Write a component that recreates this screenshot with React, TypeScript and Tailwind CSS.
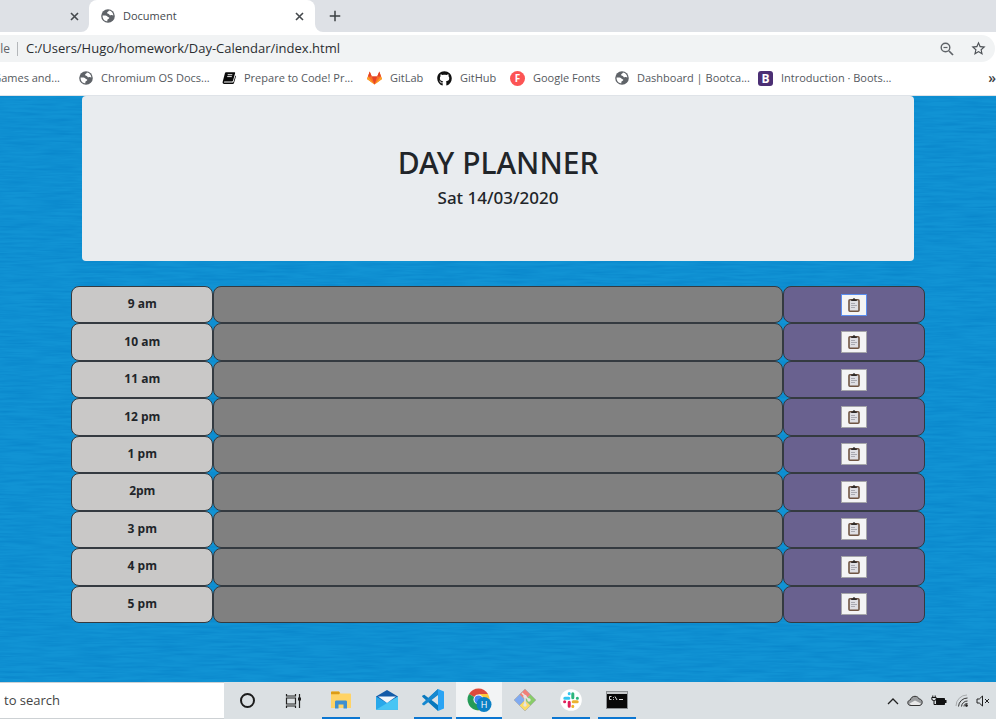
import React from "react";
import { FaGithub } from "react-icons/fa";
import { MdStarBorder, MdAdd } from "react-icons/md";

function Globe() {
  return (
    <svg width="14" height="14" viewBox="0 0 14 14" aria-hidden="true" className="shrink-0">
      <circle cx="7" cy="7" r="6.8" fill="#5f6368" />
      <path d="M1.6 6.6C4 6.2 5.6 6.4 6.400 7.400c.6.8 2 .6 1.900 1.700-.1 1-1.700.8-1.900 1.800l-.2 1.500C3.200 12.200 1.300 9.500 1.600 6.600Z" fill="#fff" />
      <path d="M8 1.600c-.2 1.200-2.100 1.200-1.900 2.400.2 1 1.900.4 2.200 1.400.3.900 1.300 1.100 2 .7.700-.3 1.300.2 2.100.5C12.300 4 10.500 1.900 8 1.600Z" fill="#fff" />
    </svg>
  );
}

function Close() {
  return (
    <svg width="13" height="13" viewBox="0 0 13 13" aria-hidden="true">
      <path d="m3 3 7 7m0-7-7 7" stroke="currentColor" strokeWidth="1.600" />
    </svg>
  );
}

function Book() {
  return (
    <svg width="14" height="14" viewBox="0 0 14 14" aria-hidden="true" className="shrink-0">
      <path d="M4 1.200h8.300c.7 0 1 .5.800 1.100l-2.100 7.400c-.1.500-.5.800-1 .8H2.600c-1 0-1 1.100 0 1.100h8.200c.4 0 .6-.2.700-.500l1.900-6.700c.5.200.6.600.5 1l-1.900 6.600c-.2.600-.6.900-1.200.9H2.300C.9 12.900.3 11.900.7 10.700L3 2c.1-.5.500-.8 1-.8Z" fill="#0a0a0a" />
      <path d="M5.700 3.700h4.600M5.200 5.600h4.600" stroke="#fff" strokeWidth=".9" />
    </svg>
  );
}

function Gitlab() {
  return (
    <svg width="15" height="14" viewBox="0 0 15 14" aria-hidden="true" className="shrink-0">
      <path d="M7.500 13.500 0 8 2.700.5 4.800 5.500h5.400L12.300.5 15 8Z" fill="#fc6d26" />
      <path d="M7.500 13.500 4.800 5.500h5.400Z" fill="#e24329" />
      <path d="M7.500 13.500 0 8l1-2.500Zm0 0L15 8l-1-2.500Z" fill="#fca326" />
      <path d="M1 5.500 2.700.5l2.100 5Zm13 0L12.300.5l-2.100 5Z" fill="#e24329" />
    </svg>
  );
}

const bookmarks = [
  { label: "Chromium OS Docs...", width: "w-[143px]", icon: <Globe /> },
  { label: "Prepare to Code! Pr...", width: "w-[145px]", icon: <Book /> },
  { label: "GitLab", width: "w-[70px]", icon: <Gitlab /> },
  { label: "GitHub", width: "w-[73px]", icon: <FaGithub size={15} color="#111" className="shrink-0" /> },
  {
    label: "Google Fonts",
    width: "w-[105px]",
    icon: <span className="size-[15px] shrink-0 rounded-full bg-[#fc5454] text-center text-[10px] leading-[15px] font-bold text-white">F</span>,
  },
  { label: "Dashboard | Bootca...", width: "w-[143px]", icon: <Globe /> },
  {
    label: "Introduction · Boots...",
    width: "w-[145px]",
    icon: <span className="size-[15px] shrink-0 rounded-[3px] bg-[#4b2f74] text-center text-[12px] leading-[15px] font-bold text-white">B</span>,
  },
];

function TabStrip() {
  return (
    <div className="flex h-8 shrink-0 bg-[#dee1e6]">
      <div className="flex w-[89px] items-center justify-end pr-2">
        <button aria-label="Close previous tab" className="text-[#45494d]"><Close /></button>
      </div>
      <div className="relative flex w-[226px] items-center rounded-t-lg bg-white pl-3">
        <svg className="absolute bottom-0 -left-2" width="8" height="8" aria-hidden="true"><path d="M8 0v8H0a8 8 0 0 0 8-8Z" fill="#fff" /></svg>
        <svg className="absolute -right-2 bottom-0" width="8" height="8" aria-hidden="true"><path d="M0 0v8h8A8 8 0 0 1 0 0Z" fill="#fff" /></svg>
        <Globe />
        <span className="ml-2 flex-1 text-[11px] text-[#45494d]">Document</span>
        <button aria-label="Close tab" className="mr-[9px] text-[#45494d]"><Close /></button>
      </div>
      <button aria-label="New tab" className="ml-[11px] text-[#3c4043]"><MdAdd size={18} /></button>
    </div>
  );
}

function AddressBar() {
  return (
    <div className="h-[33px] shrink-0 bg-white pt-[3px] pr-px">
      <div className="flex h-[27px] items-center rounded-r-full bg-[#f1f3f4] pr-2 text-[13px]">
        <span className="flex w-[10px] justify-end text-[12px] text-[#5f6368]">le</span>
        <span className="ml-[7px] h-[14px] w-px bg-[#b4b7ba]" />
        <input
          aria-label="Address"
          defaultValue="C:/Users/Hugo/homework/Day-Calendar/index.html"
          className="ml-2 min-w-0 flex-1 bg-transparent text-[#2b2e31] outline-none"
        />
        <button aria-label="Zoom out" className="mr-4">
          <svg width="14" height="14" viewBox="0 0 14 14" fill="none" stroke="#5f6368" aria-hidden="true">
            <circle cx="5.500" cy="5.500" r="4.300" strokeWidth="1.400" />
            <path d="M3.500 5.500h4" strokeWidth="1.200" />
            <path d="m9 9 4 4" strokeWidth="1.700" />
          </svg>
        </button>
        <button aria-label="Bookmark this page" className="text-[#4d5156]"><MdStarBorder size={17} /></button>
      </div>
    </div>
  );
}

function Bookmarks() {
  return (
    <nav className="flex h-[31px] shrink-0 items-center overflow-hidden border-b border-[#dfe3e8] bg-white pb-1 text-[11px] text-[#55595e]">
      <a href="#games" className="flex w-[79px] shrink-0">
        <span className="flex w-[60px] justify-end whitespace-nowrap">Games and...</span>
      </a>
      {bookmarks.map((b) => (
        <a key={b.label} href="#bookmark" className={`flex shrink-0 items-center gap-2 whitespace-nowrap ${b.width}`}>
          {b.icon}
          {b.label}
        </a>
      ))}
      <button aria-label="More bookmarks" className="ml-auto text-[14px] leading-4 font-semibold text-[#3c4043]">»</button>
    </nav>
  );
}

function Clipboard() {
  return (
    <svg width="12" height="14" viewBox="0 0 12 14" aria-hidden="true">
      <rect x="1" y="1.800" width="10" height="11.400" rx="1" fill="#dfdfe4" stroke="#705543" strokeWidth="1.600" />
      <path d="M3.200 1.500h1.500a1.300 1.300 0 0 1 2.600 0h1.500v1.600H3.200Z" fill="#2e2a28" />
      <path d="M3 5.500h4M3 7.500h6M3 9.500h4" stroke="#a9a9b1" />
    </svg>
  );
}

const hours = ["9 am", "10 am", "11 am", "12 pm", "1 pm", "2pm", "3 pm", "4 pm", "5 pm"];

function Planner() {
  return (
    <main className="relative flex-1 overflow-hidden bg-[#1193d4]">
      <svg className="absolute inset-0 size-full" aria-hidden="true">
        <filter id="grain" x="0" y="0" width="100%" height="100%" colorInterpolationFilters="sRGB">
          <feTurbulence type="fractalNoise" baseFrequency="0.026 0.4" numOctaves="3" seed="4" />
          <feColorMatrix values="0 0 0 0 0.02  0 0 0 0 0.5  0 0 0 0 0.78  1.100 0 0 0 -0.350" />
        </filter>
        <rect width="100%" height="100%" filter="url(#grain)" />
      </svg>
      <div className="relative mx-auto w-6/7 max-w-[854px]">
        <header className="mx-[11px] rounded-[4px] bg-[#e9ecef] pt-12 pb-[51px] text-center font-['Noto_Sans','Open_Sans',sans-serif] text-[#212529]">
          <h1 className="text-[30px] leading-[38px] font-medium">DAY PLANNER</h1>
          <p className="mt-1 text-[17px] leading-6 font-medium">Sat 14/03/2020</p>
        </header>
        <div className="mt-[25px] grid h-[337px] auto-rows-fr">
          {hours.map((h, i) => (
            <div key={h} className="grid grid-cols-[1fr_4fr_1fr]">
              <label htmlFor={`slot-${i}`} className="flex items-center justify-center rounded-lg border border-[#343a40] bg-[#c9c8c7] pb-px text-[12px] font-bold text-[#212529]">
                {h}
              </label>
              <input id={`slot-${i}`} className="min-w-0 rounded-lg border border-[#343a40] bg-[#808080] px-3 text-[12px] outline-none" />
              <div className="flex items-center justify-center rounded-lg border border-[#343a40] bg-[#69618f]">
                <button
                  aria-label={`Save ${h}`}
                  className={`flex h-[22px] w-[26px] items-center justify-center border bg-[#f4f4f5] ${i === 0 ? "border-[#5b8def]" : "border-[#a5a5aa]"}`}
                >
                  <Clipboard />
                </button>
              </div>
            </div>
          ))}
        </div>
      </div>
    </main>
  );
}

function TaskView() {
  return (
    <svg width="17" height="16" viewBox="0 0 17 16" fill="none" stroke="#222" strokeWidth="1.200" aria-hidden="true">
      <path d="M1.500 1v2h9V1M1.500 15v-2h9v2M1.500 5h9v6h-9ZM14.500 1v14" />
      <path d="M13 4.500h3v3h-3Z" fill="#222" stroke="none" />
    </svg>
  );
}

function Folder() {
  return (
    <svg width="20" height="18" viewBox="0 0 20 18" aria-hidden="true">
      <path d="M0 1.500C0 .7.500.5 1 .5h7l1.500 2H19c.6 0 1 .4 1 1V17H0Z" fill="#ffd366" />
      <path d="M0 1.500C0 .7.500.5 1 .5h7l1 1.500-1 1.300H0Z" fill="#dc9c16" />
      <path d="M4 17.500V11c0-1 .5-1.500 1.500-1.500h9c1 0 1.500.5 1.500 1.500v6.500h-3.500v-4h-5v4Z" fill="#3f8fd0" />
    </svg>
  );
}

function Mail() {
  return (
    <svg width="24" height="22" viewBox="0 0 24 22" aria-hidden="true">
      <path d="M1 7.500 12 1l11 6.500V14H1Z" fill="#135ba8" />
      <path d="M1 7.500 12 14l11-6.500v13.200H1Z" fill="#28a8ea" />
      <path d="m1 20.700 22-13.200v13.200Z" fill="#48c5f4" />
      <path d="M3 7.500h18L12 14Z" fill="#f3f8fc" />
    </svg>
  );
}

function Code() {
  return (
    <svg width="24" height="24" viewBox="0 0 24 24" aria-hidden="true">
      <path d="M17 1 7.500 10 3.300 6.700 1.200 7.800v1L17 23Z" fill="#0878bd" />
      <path d="m17 6.500-14 11-1.800-1v-1L17 1Z" fill="#1688d0" />
      <path d="m17 1 6 2.500v17L17 23Z" fill="#2aa4f4" />
      <path d="M17 7v10l-6.500-5Z" fill="#dde2e6" />
    </svg>
  );
}

function Chrome() {
  return (
    <svg width="26" height="25" viewBox="0 0 26 25" aria-hidden="true">
      <path d="M12.500 12.500 3 7a11 11 0 0 1 19 0Z" fill="#dc4a3d" />
      <path d="M12.500 12.500 3 7a11 11 0 0 0 9.500 16.500l4.500-8Z" fill="#259b57" />
      <path d="M12.500 7H22a11 11 0 0 1-9.500 16.500l5-8Z" fill="#fbc93d" />
      <circle cx="12.500" cy="12.500" r="5" fill="#fff" />
      <circle cx="12.500" cy="12.500" r="4" fill="#4285f4" />
      <circle cx="18" cy="17.500" r="7.500" fill="#0b80c5" />
      <text x="18" y="20.800" fontSize="9" textAnchor="middle" fill="#fff">H</text>
    </svg>
  );
}

function GitBash() {
  return (
    <svg width="24" height="24" viewBox="0 0 24 24" aria-hidden="true">
      <g stroke="#a4a8ab" strokeWidth=".6">
        <path d="m12 1 5.500 5.500L12 12 6.500 6.500Z" fill="#f08078" />
        <path d="m6.500 6.500 5.500 5.500-5.500 5.500L1 12Z" fill="#80aaf0" />
        <path d="M17.500 6.500 23 12l-5.500 5.500L12 12Z" fill="#88cc68" />
        <path d="m12 12 5.500 5.500L12 23l-5.500-5.500Z" fill="#fadb68" />
      </g>
      <path d="m9 5 3 3v9m0-9 4 4" stroke="#e4e4e4" strokeWidth="1.500" fill="none" />
      <g fill="#e4e4e4"><circle cx="12" cy="8.500" r="1.700" /><circle cx="12" cy="17" r="1.700" /><circle cx="16" cy="12" r="1.700" /></g>
    </svg>
  );
}

function Slack() {
  return (
    <svg width="22" height="22" viewBox="0 0 22 22" aria-hidden="true">
      <circle cx="11" cy="11" r="10.800" fill="#fff" />
      <g strokeWidth="3" strokeLinecap="round">
        <path d="M4.800 9.200h4M9.200 4.600v.1" stroke="#36c5f0" />
        <path d="M12.800 4.800v4M17.400 9.200h-.1" stroke="#2eb67d" />
        <path d="M9.200 13.200v4M4.600 12.800h.1" stroke="#e01e5a" />
        <path d="M13.200 12.800h4M12.800 17.400v-.1" stroke="#ecb22e" />
      </g>
    </svg>
  );
}

function Terminal() {
  return (
    <svg width="22" height="18" viewBox="0 0 22 18" aria-hidden="true">
      <rect x=".5" y=".5" width="21" height="17" fill="#080808" stroke="#8b8f92" />
      <path d="M1 1h20v2H1Z" fill="#c6c9cb" />
      <path d="M5.500 5.500H3.500v3h2M7.500 6v.8m0 1.200v.8M9 5.500l2 3.500M13 8.500h4" stroke="#ddd" fill="none" />
    </svg>
  );
}

const apps = [
  { name: "File Explorer", icon: <Folder />, open: true, active: false },
  { name: "Mail", icon: <Mail />, open: false, active: false },
  { name: "Visual Studio Code", icon: <Code />, open: true, active: false },
  { name: "Chrome", icon: <Chrome />, open: true, active: true },
  { name: "Git Bash", icon: <GitBash />, open: false, active: false },
  { name: "Slack", icon: <Slack />, open: true, active: false },
  { name: "Command Prompt", icon: <Terminal />, open: true, active: false },
];

function Tray() {
  return (
    <div className="ml-auto flex items-center gap-2 pr-[6px]">
      <svg width="12" height="8" viewBox="0 0 12 8" fill="none" stroke="#222" strokeWidth="1.300" aria-label="Show hidden icons"><path d="m1 7 5-5 5 5" /></svg>
      <svg width="16" height="12" viewBox="0 0 16 12" aria-label="OneDrive">
        <path d="M4 10.500C1.500 10.500.7 9 .8 7.500.9 6 2 5.200 3.300 5 4 2.500 5.800 1.200 8 1.300c2 .1 3.400 1 4.200 2.700C14.500 4.300 15.300 5.800 15.200 7.500c-.1 2-1.500 3-3.200 3Z" fill="#9b9d9f" stroke="#333" />
        <path d="m2.500 8.500 5.500-3 6 3-1.500 1.400H4Z" fill="#e8e8e8" />
      </svg>
      <svg width="16" height="12" viewBox="0 0 16 12" aria-label="Battery charging">
        <path d="M5.500 3.500h8v6h-8Z" fill="#111" stroke="#111" />
        <path d="M14 5h1.500v3H14Z" fill="#111" />
        <path d="M.8 2.500h4.400v1.300A1.700 1.700 0 0 1 3.500 5.500h-1A1.700 1.700 0 0 1 .8 3.800ZM1.800.5v2m2.400-2v2M3 5.500v4h2.500" fill="none" stroke="#111" />
      </svg>
      <svg width="13" height="13" viewBox="0 0 13 13" fill="none" stroke="#333" aria-label="Wi-Fi">
        <path d="M1 12A11 11 0 0 1 12 1" stroke="#a8abad" />
        <path d="M3.500 12.500A9 9 0 0 1 12.500 4M6.500 12.500a6 6 0 0 1 6-5.500M9 12.500a3 3 0 0 1 3.500-3" />
        <circle cx="11.500" cy="11.500" r="1" fill="#222" />
      </svg>
      <svg width="14" height="12" viewBox="0 0 14 12" fill="none" stroke="#222" aria-label="Muted"><path d="M1 4h2.300L6.500 1v10L3.300 8H1ZM9 4l4 4m0-4L9 8" /></svg>
    </div>
  );
}

function Taskbar() {
  return (
    <footer className="flex h-[37px] shrink-0 bg-[#dbe0e3]">
      <div className="flex w-[224px] items-center overflow-hidden border-y border-[#cdd1d4] bg-white">
        <input aria-label="Type here to search" placeholder="to search" className="w-full pl-1 text-[13px] text-[#444] outline-none placeholder:text-[#444]" />
      </div>
      <div className="flex pr-0.5">
        <button aria-label="Cortana" className="flex w-[46px] items-center justify-center"><span className="size-[15px] rounded-full border-2 border-[#1c1c1c]" /></button>
        <button aria-label="Task View" className="flex w-[46px] items-center justify-center"><TaskView /></button>
      </div>
      {apps.map((a) => (
        <button key={a.name} aria-label={a.name} className={`flex w-[46px] flex-col items-center ${a.active ? "bg-[#f2f4f5]" : ""}`}>
          <span className="flex flex-1 items-center">{a.icon}</span>
          <span className={`h-0.5 ${a.active ? "w-full" : "w-[38px]"} ${a.open ? "bg-[#0b76d1]" : ""}`} />
        </button>
      ))}
      <Tray />
    </footer>
  );
}

export default function App() {
  return (
    <div className="flex h-screen flex-col overflow-hidden font-['Open_Sans','Noto_Sans',sans-serif]">
      <TabStrip />
      <AddressBar />
      <Bookmarks />
      <Planner />
      <Taskbar />
    </div>
  );
}
